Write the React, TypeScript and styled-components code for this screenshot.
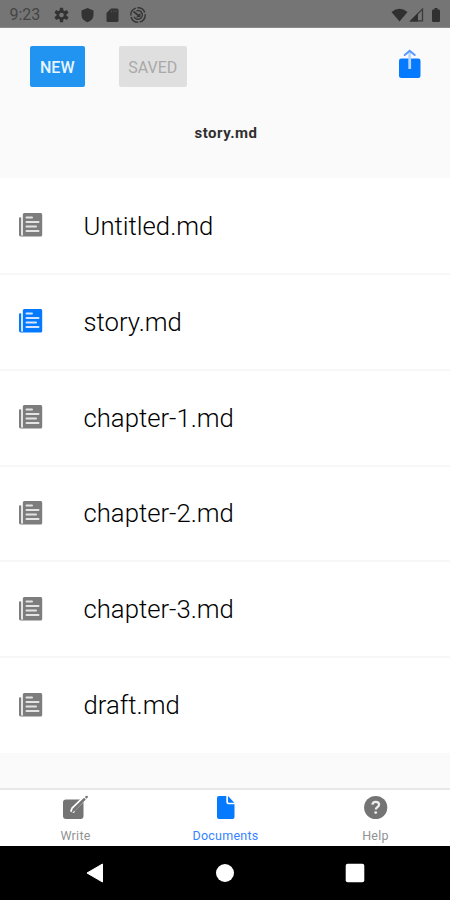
import React from "react";
import styled, { createGlobalStyle } from "styled-components";

const BLUE = "#057aff";
const GRAY = "#7d7d7d";

const GlobalStyle = createGlobalStyle`
  * { box-sizing: border-box; }
  body { margin: 0; background: #fafafa; font-family: Roboto, "Liberation Sans", sans-serif; }
  svg { display: block; flex: none; }
`;

const Screen = styled.div`
  width: 450px;
  height: 900px;
  display: flex;
  flex-direction: column;
  overflow: hidden;
  background: #fafafa;
`;

const StatusBar = styled.header`
  height: 28px;
  flex: none;
  display: flex;
  align-items: center;
  justify-content: space-between;
  padding: 2px 7px 0 9.5px;
  background: #757575;
  border-bottom: 1px solid #8a8a8a;
  color: #454545;
`;

const Clock = styled.span`
  font-size: 16px;
  line-height: 20px;
  width: 43px;
`;

const StatusGroup = styled.div`
  display: flex;
  align-items: center;
`;

const Toolbar = styled.div`
  height: 77px;
  flex: none;
  display: flex;
  align-items: center;
  padding: 0 28.5px 0 30px;
`;

const ToolButton = styled.button<{ $primary?: boolean }>`
  height: 41px;
  width: ${(p) => (p.$primary ? 54.5 : 68.5)}px;
  margin-right: 34px;
  padding: 1px 0 0;
  border: 0;
  border-radius: 2px;
  font: ${(p) => (p.$primary ? 500 : 400)} 16px Roboto, sans-serif;
  color: ${(p) => (p.$primary ? "#e9f5ff" : "#a9a9a9")};
  background: ${(p) => (p.$primary ? "#2094f0" : "#dfdfdf")};
`;

const ShareButton = styled.button`
  margin: 0 0 6px auto;
  padding: 0;
  border: 0;
  background: none;
`;

const Title = styled.h1`
  height: 73px;
  flex: none;
  margin: 0;
  padding: 18px 0 0 2px;
  text-align: center;
  font-size: 15px;
  line-height: 20px;
  font-weight: 700;
  letter-spacing: 0.5px;
  color: #303030;
`;

const FileList = styled.ul`
  height: 575px;
  flex: none;
  display: grid;
  grid-template-rows: repeat(6, 1fr);
  margin: 0;
  padding: 0;
  list-style: none;
  background: #fff;
`;

const FileRow = styled.li`
  display: flex;
  align-items: center;
  gap: 41px;
  padding: 0 17.5px;
  border-bottom: 1px solid #f7f7f7;
  box-shadow: 0 1px 0 #f7f7f7;
  &:last-child { border-bottom-color: transparent; box-shadow: none; }
`;

const FileName = styled.span`
  font-size: 25.7px;
  line-height: 32px;
  font-weight: 300;
  padding-top: 1px;
  color: #000;
`;

const TabBar = styled.nav`
  height: 58px;
  flex: none;
  margin-top: auto;
  display: grid;
  grid-template-columns: repeat(3, 1fr);
  background: #fff;
  border-top: 2px solid #e8e8e8;
`;

const Tab = styled.div<{ $active?: boolean }>`
  display: flex;
  flex-direction: column;
  align-items: center;
  padding: 5px 0 0 1px;
  gap: 7px;
  font-size: 12.5px;
  line-height: 16px;
  letter-spacing: 0.25px;
  color: ${(p) => (p.$active ? "#3683ff" : "#929292")};
`;

const SystemNav = styled.footer`
  height: 54px;
  flex: none;
  display: grid;
  grid-template-columns: 190px 70px 190px;
  justify-items: center;
  align-items: center;
  background: #000;
`;

const StatusIcons = () => (
  <svg width="96" height="18" viewBox="0 0 96 18" fill="#333">
    <g transform="translate(8.5 9)">
      {[0, 60, 120].map((a) => (
        <rect key={a} x="-1.7" y="-7.2" width="3.4" height="14.4" rx=".6" transform={`rotate(${a})`} />
      ))}
      <circle r="3.7" fill="none" stroke="#333" strokeWidth="2.7" />
      <circle r="2.3" fill="#757575" />
    </g>
    <path d="M34.500 2l6 2.500v4.200c0 3.600-2.500 6.300-6 7.600-3.500-1.300-6-4-6-7.600V4.500z" />
    <path d="M58 2.500h6q1.500 0 1.500 1.500v10.500q0 1.500-1.500 1.500h-9q-1.500 0-1.500-1.500V7z" />
    <path d="M58.500 4v2.500M60.800 4v2.500M63.100 4v2.500" stroke="#505050" strokeWidth=".8" />
    <g transform="translate(85 9)" fill="none" stroke="#363636">
      <circle r="7.200" strokeWidth="1.500" strokeDasharray="9.500 1.500" />
      <path d="M-1.500-4.100A4.300 4.300 0 1 1-3.900 1.700" strokeWidth="1.500" />
      <path d="M-4.500-3.500L.5.500" strokeWidth="1.800" />
      <path d="M-2.200 2.500L2.500 2V-2.200z" fill="#363636" stroke="none" />
    </g>
  </svg>
);

const ConnectionIcons = () => (
  <svg width="52" height="18" viewBox="0 0 52 18" fill="#303030">
    <path d="M.5 6Q8.500-.5 16.500 6L8.500 15.500z" />
    <path d="M31.500 3v11.800H20z" fill="none" stroke="#3b3b3b" strokeWidth="1.300" />
    <path d="M18.500 15.500L27 7v8.500z" />
    <path d="M43.500 2h3v1.500h1.200q1.300 0 1.300 1.200v10q0 1.300-1.300 1.300h-5.400q-1.300 0-1.300-1.300v-10q0-1.200 1.300-1.200h1.200z" />
  </svg>
);

const ShareIcon = () => (
  <svg width="24" height="30" viewBox="0 0 24 30">
    <rect x="1" y="9.500" width="21.500" height="19.500" rx="2.300" fill={BLUE} />
    <path d="M11.700 20V3" stroke="#bcd5ff" strokeWidth="2.800" />
    <path d="M6.700 6l5-4.300 5 4.300" fill="none" stroke="#5798ff" strokeWidth="2" strokeLinecap="round" />
  </svg>
);

const DocumentIcon = ({ active }: { active: boolean }) => (
  <svg width="25" height="26" viewBox="0 0 25 26" fill={active ? BLUE : GRAY}>
    <path d="M3.200 5.200v17.300q0 1.500 1.800 2H2.800Q1 24.500 1 22.700V6.500Q1 5.200 2.300 5.200z" />
    <path d="M6.300 1h16.400q1.500 0 1.500 1.500v20.500q0 1.500-1.500 1.500H3.500q1.300-.3 1.300-1.800V2.500Q4.800 1 6.300 1z" />
    <path d="M8.500 5.500h5.500M8.500 10h12M8.500 14.500h9.500M8.500 19h12" stroke={active ? "#d5e5ff" : "#e4e4e4"} strokeWidth="2" strokeLinecap="round" />
  </svg>
);

const WriteIcon = () => (
  <svg width="27" height="26" viewBox="0 0 27 26">
    <rect x="1" y="4.500" width="20.500" height="19.500" rx="3" fill="#747474" />
    <path d="M10 17.200l1.300-3.200L22.500 3.200" fill="none" stroke="#fff" strokeWidth="4.600" strokeLinejoin="round" />
    <path d="M9.500 17.800l1.200-4L22 2.800l1.800 1.700-10.800 11.300zM22.800 2L24 .9q1-.6 1.600.2.700.8 0 1.600l-1.100 1.100z" fill="#747474" />
  </svg>
);

const DocumentTabIcon = () => (
  <svg width="20" height="26" viewBox="0 0 20 26">
    <path d="M3 1h7.300v6q0 2.200 2.200 2.200H18.500V22q0 2-2 2H3q-2 0-2-2V3q0-2 2-2z" fill={BLUE} />
    <path d="M12 1l6.300 6.700H13q-1 0-1-1z" fill={BLUE} />
  </svg>
);

const HelpIcon = () => (
  <svg width="26" height="26" viewBox="0 0 26 26">
    <circle cx="12.700" cy="12.500" r="11.600" fill="#747474" />
    <path d="M9.400 9.700q.2-2.900 3.300-2.900 3.400 0 3.400 2.800 0 1.500-1.800 2.600-1.500.9-1.500 2.400" fill="none" stroke="#eee" strokeWidth="2.200" />
    <circle cx="12.700" cy="17.600" r="1.400" fill="#eee" />
  </svg>
);

const files = ["Untitled.md", "story.md", "chapter-1.md", "chapter-2.md", "chapter-3.md", "draft.md"];

export default function App() {
  return (
    <Screen>
      <GlobalStyle />
      <StatusBar>
        <StatusGroup><Clock>9:23</Clock><StatusIcons /></StatusGroup>
        <ConnectionIcons />
      </StatusBar>
      <Toolbar>
        <ToolButton $primary>NEW</ToolButton>
        <ToolButton disabled>SAVED</ToolButton>
        <ShareButton aria-label="Share"><ShareIcon /></ShareButton>
      </Toolbar>
      <Title>story.md</Title>
      <FileList>
        {files.map((name) => (
          <FileRow key={name}>
            <DocumentIcon active={name === "story.md"} />
            <FileName>{name}</FileName>
          </FileRow>
        ))}
      </FileList>
      <TabBar>
        <Tab><WriteIcon />Write</Tab>
        <Tab $active><DocumentTabIcon />Documents</Tab>
        <Tab><HelpIcon />Help</Tab>
      </TabBar>
      <SystemNav>
        <svg width="18" height="20" viewBox="0 0 18 20"><path d="M1 10L16.500 1v18z" fill="#fff" stroke="#fff" strokeLinejoin="round" /></svg>
        <svg width="20" height="20" viewBox="0 0 20 20"><circle cx="10" cy="10" r="9" fill="#fff" /></svg>
        <svg width="20" height="20" viewBox="0 0 20 20"><rect x=".7" y=".7" width="18.600" height="18.600" rx="2" fill="#fff" /></svg>
      </SystemNav>
    </Screen>
  );
}
